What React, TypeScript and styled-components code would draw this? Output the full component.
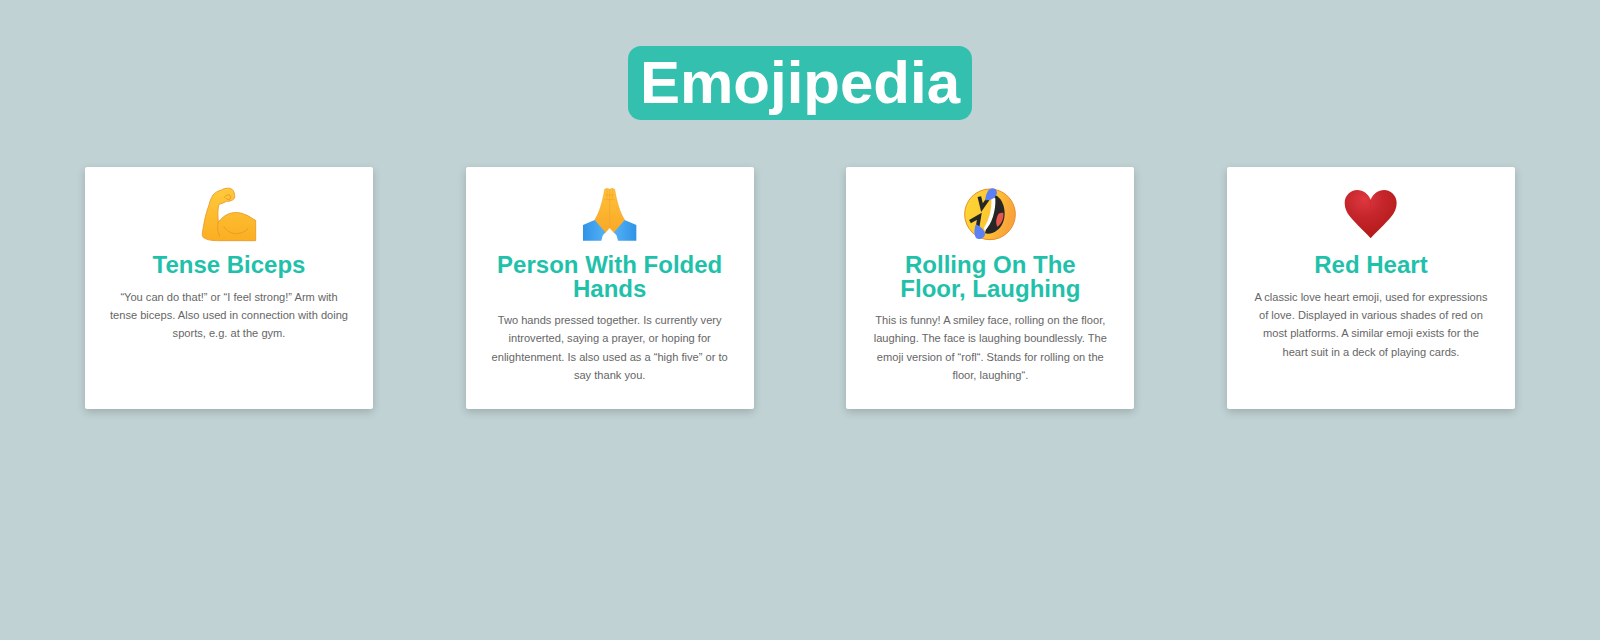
import React from 'react'
import styled, { createGlobalStyle } from 'styled-components'

const GlobalStyle = createGlobalStyle`
  html, body {
    margin: 0;
    background: #c0d2d4;
    font-family: "Liberation Sans", Arial, sans-serif;
  }
`

const Page = styled.div`
  min-height: 640px;
  box-sizing: border-box;
  padding: 46px 85px 0;
`

const Header = styled.header`
  display: flex;
  justify-content: center;
  margin-bottom: 47px;
`

const Title = styled.h1`
  margin: 0;
  height: 74px;
  padding: 0 11.5px;
  border-radius: 13px;
  background: #34c0ae;
  color: #ffffff;
  font-size: 60px;
  font-weight: 700;
  line-height: 74px;
`

const CardRow = styled.div`
  display: flex;
  justify-content: space-between;
`

const Card = styled.article`
  box-sizing: border-box;
  width: 288px;
  height: 242px;
  padding: 20px 24px 0;
  border-radius: 2px;
  background: #ffffff;
  box-shadow: 0 3px 8px rgba(0, 0, 0, 0.18);
  text-align: center;
`

const Emoji = styled.svg`
  display: block;
  width: 56px;
  height: 56px;
  margin: 0 auto 10px;
`

const CardTitle = styled.h2`
  margin: 0 0 11px;
  color: #1fc1ab;
  font-size: 24px;
  font-weight: 700;
  line-height: 23.5px;
`

const CardText = styled.p`
  margin: 0;
  color: #666666;
  font-size: 11.1px;
  line-height: 18.4px;
`

const Biceps = () => (
  <Emoji viewBox="0 0 168 168">
    <defs>
      <linearGradient id="biceps" x1="0" y1="0" x2="0" y2="1">
        <stop offset="0" stopColor="#ffca3c" />
        <stop offset="1" stopColor="#fbae22" />
      </linearGradient>
    </defs>
    <path
      d="M164 161V100C155 97 145 86 130 82C118 76 96 74 80 82C70 86 60 96 52 105C50 85 50 65 54 52C62 50 70 47 76 43C92 44 103 36 101 26C100 14 96 6 86 4C76 2 66 6 61 9C48 12 42 18 36 24C30 34 26 44 24 54C18 70 14 84 11 99C8 112 6 126 4 139C3 148 6 152 11 154C24 161 40 161 60 161Z"
      fill="url(#biceps)"
      stroke="#ea9528"
      strokeWidth="2.5"
    />
    <path d="M52 105C48 118 50 136 56 148" fill="none" stroke="#e8952a" strokeWidth="2.5" />
    <path d="M68 118C84 146 122 146 142 124" fill="none" stroke="#e8952a" strokeWidth="2.5" />
    <path d="M70 32C76 20 92 22 89 33C86 40 78 38 76 33" fill="none" stroke="#e8952a" strokeWidth="3" />
  </Emoji>
)

const FoldedHands = () => (
  <Emoji viewBox="0 0 168 168">
    <defs>
      <linearGradient id="palm" x1="0" y1="0" x2="0" y2="1">
        <stop offset="0" stopColor="#ffc23a" />
        <stop offset="1" stopColor="#f9a825" />
      </linearGradient>
      <linearGradient id="sleeve" x1="0" y1="0" x2="1" y2="0">
        <stop offset="0" stopColor="#2f93e6" />
        <stop offset="1" stopColor="#54b1f5" />
      </linearGradient>
      <linearGradient id="sleeveRight" x1="1" y1="0" x2="0" y2="0">
        <stop offset="0" stopColor="#2f93e6" />
        <stop offset="1" stopColor="#54b1f5" />
      </linearGradient>
    </defs>
    <path d="M68 7C72 4 79 4 83 7V122L68 139L38 99C52 78 62 44 68 7Z" fill="url(#palm)" stroke="#ef9a24" strokeWidth="1.5" />
    <path d="M98 7C94 4 87 4 83 7V122L98 139L128 99C114 78 104 44 98 7Z" fill="url(#palm)" stroke="#ef9a24" strokeWidth="1.5" />
    <path d="M70 24H96M68 38H98M75 7V36M91 7V36" stroke="#ef9a24" strokeWidth="1.5" />
    <path d="M3 114L38 99L70 136L62 146L58 161H3Z" fill="url(#sleeve)" />
    <path d="M163 114L128 99L96 136L104 146L108 161H163Z" fill="url(#sleeveRight)" />
  </Emoji>
)

const RollingLaughing = () => (
  <Emoji viewBox="0 0 168 168">
    <defs>
      <linearGradient id="face" x1="0" y1="0" x2="1" y2="0.3">
        <stop offset="0" stopColor="#fdd835" />
        <stop offset="0.55" stopColor="#fdc832" />
        <stop offset="1" stopColor="#f9a33a" />
      </linearGradient>
    </defs>
    <circle cx="84" cy="82" r="76" fill="url(#face)" stroke="#e98c28" strokeWidth="3" />
    <path d="M100 24C132 40 138 100 110 126C94 140 80 142 69 139Z" fill="#262626" />
    <path d="M100 34C102 70 90 112 69 131C66 128 65 124 67 120C82 96 90 64 88 32Z" fill="#ffffff" />
    <path d="M110 80C116 78 122 76 124 78C126 92 120 110 106 119C100 108 102 92 110 80Z" fill="#e8574c" />
    <path d="M52 29L60 62L78 36" fill="none" stroke="#262626" strokeWidth="11" strokeLinejoin="miter" />
    <path d="M24 104L52 88L46 124" fill="none" stroke="#262626" strokeWidth="11" strokeLinejoin="miter" />
    <path d="M70 40C70 24 78 5 90 4C102 3 108 14 103 24C96 36 84 41 70 40Z" fill="#5b7ff5" />
    <path d="M42 112C36 126 35 146 43 154C52 160 68 153 69 142C69 130 56 119 42 112Z" fill="#5b7ff5" />
  </Emoji>
)

const RedHeart = () => (
  <Emoji viewBox="0 0 168 168">
    <defs>
      <radialGradient id="heart" cx="0.38" cy="0.2" r="0.7">
        <stop offset="0" stopColor="#df373f" />
        <stop offset="0.5" stopColor="#c5262c" />
        <stop offset="1" stopColor="#b71c1c" />
      </radialGradient>
    </defs>
    <path
      d="M83 154C68 136 40 112 22 90C11 77 5 64 5 48C5 26 22 9 43 9C60 9 75 20 83 38C91 20 106 9 123 9C144 9 161 26 161 48C161 64 155 77 144 90C126 112 98 136 83 154Z"
      fill="url(#heart)"
    />
    <path d="M83 38V60" stroke="#a81b1b" strokeWidth="1.5" opacity="0.45" />
  </Emoji>
)

const emojis = [
  {
    id: 'biceps',
    icon: <Biceps />,
    name: 'Tense Biceps',
    meaning:
      '“You can do that!” or “I feel strong!” Arm with tense biceps. Also used in connection with doing sports, e.g. at the gym.',
  },
  {
    id: 'hands',
    icon: <FoldedHands />,
    name: 'Person With Folded Hands',
    meaning:
      'Two hands pressed together. Is currently very introverted, saying a prayer, or hoping for enlightenment. Is also used as a “high five” or to say thank you.',
  },
  {
    id: 'rofl',
    icon: <RollingLaughing />,
    name: 'Rolling On The Floor, Laughing',
    meaning:
      'This is funny! A smiley face, rolling on the floor, laughing. The face is laughing boundlessly. The emoji version of “rofl“. Stands for rolling on the floor, laughing“.',
  },
  {
    id: 'heart',
    icon: <RedHeart />,
    name: 'Red Heart',
    meaning:
      'A classic love heart emoji, used for expressions of love. Displayed in various shades of red on most platforms. A similar emoji exists for the heart suit in a deck of playing cards.',
  },
]

const App = () => (
  <Page>
    <GlobalStyle />
    <Header>
      <Title>Emojipedia</Title>
    </Header>
    <CardRow>
      {emojis.map((emoji) => (
        <Card key={emoji.id}>
          {emoji.icon}
          <CardTitle>{emoji.name}</CardTitle>
          <CardText>{emoji.meaning}</CardText>
        </Card>
      ))}
    </CardRow>
  </Page>
)

export default App
